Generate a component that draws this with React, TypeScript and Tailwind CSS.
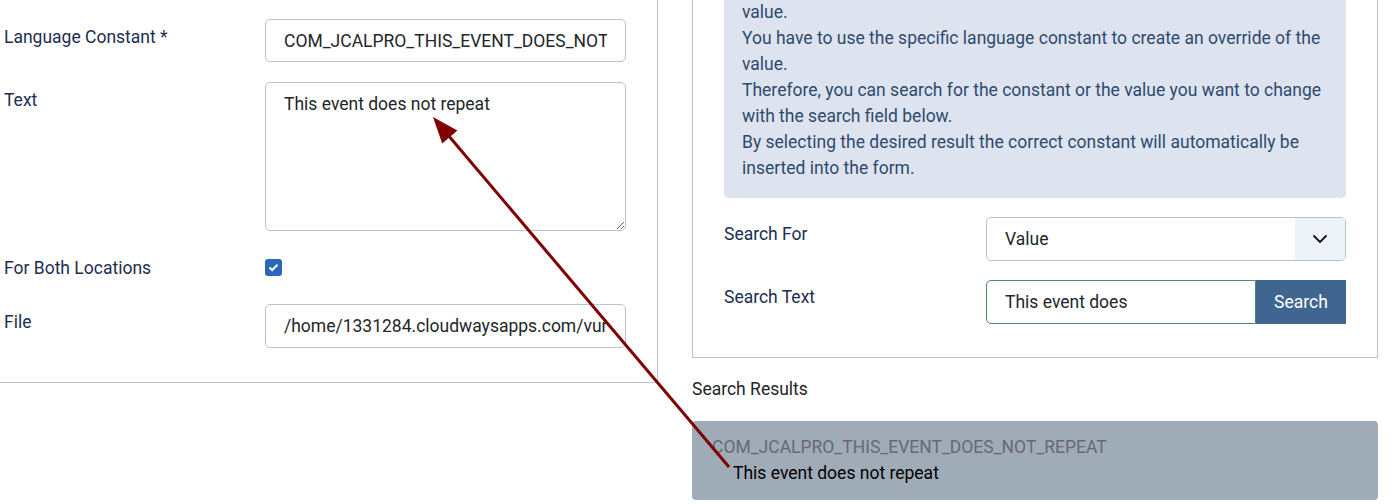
import { ChevronDown } from 'lucide-react'

const LABEL = 'text-[#1c2e4f]'
const FIELD =
  'w-full rounded-[5px] border border-[#b6c4d8] bg-white px-[18px] text-[17.5px] text-[#22262a] outline-none'

function Row({ label, children, className = '' }: { label: string; children: React.ReactNode; className?: string }) {
  return (
    <div className={'flex ' + className}>
      <div className={'w-[261px] pt-[6px] leading-6 ' + LABEL}>{label}</div>
      <div className="w-[361px]">{children}</div>
    </div>
  )
}

function Arrow() {
  return (
    <svg className="pointer-events-none absolute left-0 top-0" width="1394" height="504">
      <line x1="729" y1="467" x2="448" y2="135" stroke="#800000" strokeWidth="3" />
      <polygon points="433,117 457.4,130.4 442.2,143.4" fill="#800000" />
    </svg>
  )
}

export default function App() {
  return (
    <div
      className="relative h-[504px] w-[1394px] overflow-hidden bg-white text-[17.5px]"
      style={{ fontFamily: 'Roboto, "Noto Sans", sans-serif' }}
    >
      <div className="flex items-start">
        {/* left form */}
        <div className="-mt-[43px] w-[658px] border-r border-b border-[#b6c4d8] pl-1 pb-[34px]">
          <Row label="">
            <input className={FIELD + ' h-[43px]'} readOnly defaultValue="" />
          </Row>
          <Row label="Language Constant *" className="mt-[19px]">
            <input className={FIELD + ' h-[43px]'} readOnly defaultValue="COM_JCALPRO_THIS_EVENT_DOES_NOT_REPEAT" />
          </Row>
          <Row label="Text" className="mt-5">
            <textarea
              className="block h-[149px] w-full rounded-[5px] border border-[#b6c4d8] bg-white px-[18px] py-[9px] text-[17.5px] leading-6 text-[#22262a] outline-none"
              readOnly
              defaultValue="This event does not repeat"
            />
          </Row>
          <Row label="For Both Locations" className="mt-[19px] h-[34px]">
            <div className="mt-[9px] flex h-[17px] w-[17px] items-center justify-center rounded-[3px] bg-[#2a69b8]">
              <svg width="11" height="9" viewBox="0 0 11 9">
                <path d="M1.5 4.5 L4.2 7 L9.5 1.8" fill="none" stroke="white" strokeWidth="2" />
              </svg>
            </div>
          </Row>
          <Row label="File" className="mt-5">
            <input
              className={FIELD + ' h-[44px] bg-[#e9e9e9]'}
              readOnly
              defaultValue="/home/1331284.cloudwaysapps.com/vurjqpvxsn/public_html/language/en-GB/en-GB.com_jcalpro.ini"
            />
          </Row>
        </div>

        {/* right search panel */}
        <div className="-mt-[77px] ml-[34px] w-[686px]">
          <div className="border border-[#b6c4d8] px-[31px] pt-[32px] pb-[33px]">
            <div className="rounded-[5px] bg-[#dde4f0] px-[18px] py-[17px] leading-[26px] text-[#2e4a6d]">
              <div className="overflow-hidden whitespace-nowrap">
                A language string is composed of two parts: a specific language constant and its
              </div>
              value.
              <br />
              You have to use the specific language constant to create an override of the value.
              <br />
              Therefore, you can search for the constant or the value you want to change with the search field below.
              <br />
              By selecting the desired result the correct constant will automatically be inserted into the form.
            </div>

            <div className="mt-[19px] flex">
              <div className={'w-[262px] pt-[5px] leading-6 ' + LABEL}>Search For</div>
              <div className="flex h-[44px] flex-1 overflow-hidden rounded-[5px] border border-[#b6c4d8] bg-white">
                <div className="flex flex-1 items-center px-[18px] text-[#22262a]">Value</div>
                <div className="flex w-[50px] items-center justify-center bg-[#eef3fa]">
                  <ChevronDown size={24} strokeWidth={1.8} color="#111" />
                </div>
              </div>
            </div>

            <div className="mt-[19px] flex">
              <div className={'w-[262px] pt-[5px] leading-6 ' + LABEL}>Search Text</div>
              <div className="flex h-[44px] flex-1">
                <input
                  className="h-full flex-1 rounded-l-[5px] border border-[#4d8a5e] bg-white px-[18px] text-[17.5px] text-[#22262a] outline-none"
                  readOnly
                  defaultValue="This event does"
                />
                <button className="h-full w-[90px] bg-[#3f6590] text-white">Search</button>
              </div>
            </div>
          </div>

          <div className="mt-[19px] leading-6 text-[#22262a]">Search Results</div>
          <div className="mt-[20px] h-[79px] rounded-[4px] bg-[#a0abb8] px-5 pt-[13px] leading-[26px]">
            <div className="text-[#666a70]">COM_JCALPRO_THIS_EVENT_DOES_NOT_REPEAT</div>
            <div className="pl-[21px] text-black">This event does not repeat</div>
          </div>
        </div>
      </div>
      <Arrow />
    </div>
  )
}
